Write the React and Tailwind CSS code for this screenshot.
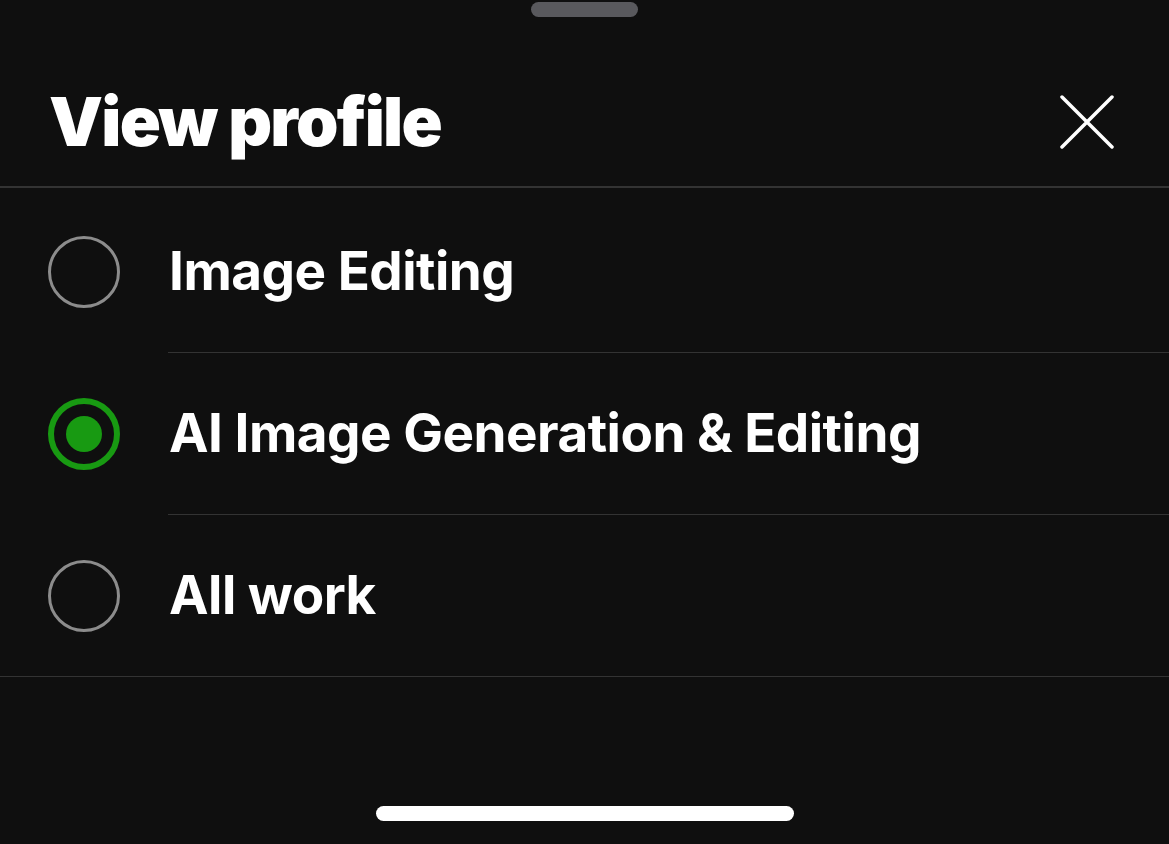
import React, { useState } from 'react';

const OPTIONS = ['Image Editing', 'AI Image Generation & Editing', 'All work'];

const Radio = ({ checked }) =>
  checked ? (
    <div className="w-[72px] h-[72px] rounded-full border-[6px] border-[#189a12] flex items-center justify-center shrink-0">
      <div className="w-[36px] h-[36px] rounded-full bg-[#189a12]" />
    </div>
  ) : (
    <div className="w-[72px] h-[72px] rounded-full border-[3px] border-[#8c8c8c] shrink-0" />
  );

export default function App() {
  const [selected, setSelected] = useState(1);

  return (
    <div
      className="w-[1169px] h-[844px] bg-[#0f0f0f] text-white flex flex-col overflow-hidden"
      style={{ fontFamily: 'Inter, "Noto Sans", sans-serif' }}
    >
      {/* Grabber */}
      <div className="flex justify-center pt-[2px]">
        <div className="w-[107px] h-[15px] rounded-full bg-[#59595d]" />
      </div>

      {/* Header */}
      <div className="flex items-center justify-between pl-[49px] pr-[55px] pt-[38px] h-[171px] border-b-2 border-[#333333]">
        <h1 className="text-[68px] font-black tracking-[-1.75px] leading-none mt-[1px]">View profile</h1>
        <button className="w-[54px] h-[54px] flex items-center justify-center mt-[3px]">
          <svg width="54" height="54" viewBox="0 0 54 54" fill="none" stroke="white" strokeWidth="3.5" strokeLinecap="round">
            <path d="M2 2 L52 52 M52 2 L2 52" />
          </svg>
        </button>
      </div>

      {/* Options */}
      <div className="flex flex-col pt-[3px]">
        {OPTIONS.map((label, i) => (
          <button
            key={label}
            onClick={() => setSelected(i)}
            className="flex items-stretch text-left"
          >
            <div className="w-[168px] flex items-center pl-[48px]">
              <Radio checked={selected === i} />
            </div>
            <div
              className={`flex-1 h-[162px] flex items-center border-b ${
                i === OPTIONS.length - 1 ? 'border-transparent' : 'border-[#333333]'
              }`}
            >
              <span className="text-[53px] font-bold tracking-[-0.5px] pl-[1px]">{label}</span>
            </div>
          </button>
        ))}
        <div className="h-px bg-[#333333] -mt-px" />
      </div>

      {/* Home indicator */}
      <div className="mt-auto flex justify-center pb-[23px]">
        <div className="w-[418px] h-[15px] rounded-full bg-white" />
      </div>
    </div>
  );
}
